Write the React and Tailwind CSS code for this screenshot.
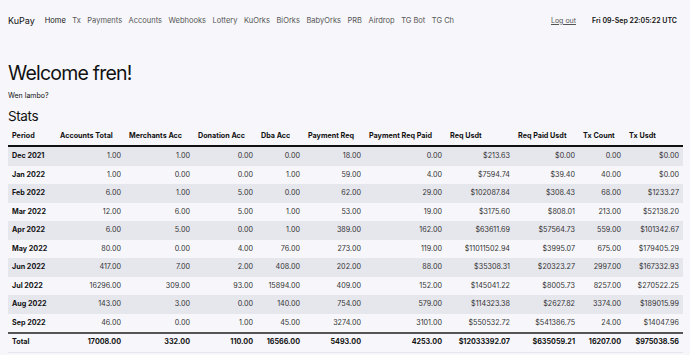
const navLinks = [
  "Tx",
  "Payments",
  "Accounts",
  "Webhooks",
  "Lottery",
  "KuOrks",
  "BiOrks",
  "BabyOrks",
  "PRB",
  "Airdrop",
  "TG Bot",
  "TG Ch",
];

const columns = [
  { label: "Period", w: "w-[48px]" },
  { label: "Accounts Total", w: "w-[69px]" },
  { label: "Merchants Acc", w: "w-[69px]" },
  { label: "Donation Acc", w: "w-[63px]" },
  { label: "Dba Acc", w: "w-[47px]" },
  { label: "Payment Req", w: "w-[61px]" },
  { label: "Payment Req Paid", w: "w-[81px]" },
  { label: "Req Usdt", w: "w-[68px]" },
  { label: "Req Paid Usdt", w: "w-[65px]" },
  { label: "Tx Count", w: "w-[46px]" },
  { label: "Tx Usdt", w: "w-[58px]" },
];

const rows = [
  ["Dec 2021", "1.00", "1.00", "0.00", "0.00", "18.00", "0.00", "$213.63", "$0.00", "0.00", "$0.00"],
  ["Jan 2022", "1.00", "0.00", "0.00", "1.00", "59.00", "4.00", "$7594.74", "$39.40", "40.00", "$0.00"],
  ["Feb 2022", "6.00", "1.00", "5.00", "0.00", "62.00", "29.00", "$102087.84", "$308.43", "68.00", "$1233.27"],
  ["Mar 2022", "12.00", "6.00", "5.00", "1.00", "53.00", "19.00", "$3175.60", "$808.01", "213.00", "$52138.20"],
  ["Apr 2022", "6.00", "5.00", "0.00", "1.00", "389.00", "162.00", "$63611.69", "$57564.73", "559.00", "$101342.67"],
  ["May 2022", "80.00", "0.00", "4.00", "76.00", "273.00", "119.00", "$11011502.94", "$3995.07", "675.00", "$179405.29"],
  ["Jun 2022", "417.00", "7.00", "2.00", "408.00", "202.00", "88.00", "$35308.31", "$20323.27", "2997.00", "$167332.93"],
  ["Jul 2022", "16296.00", "309.00", "93.00", "15894.00", "409.00", "152.00", "$145041.22", "$8005.73", "8257.00", "$270522.25"],
  ["Aug 2022", "143.00", "3.00", "0.00", "140.00", "754.00", "579.00", "$114323.38", "$2627.82", "3374.00", "$189015.99"],
  ["Sep 2022", "46.00", "0.00", "1.00", "45.00", "3274.00", "3101.00", "$550532.72", "$541386.75", "24.00", "$14047.96"],
];

const total = ["Total", "17008.00", "332.00", "110.00", "16566.00", "5493.00", "4253.00", "$12033392.07", "$635059.21", "16207.00", "$975038.56"];

export default function App() {
  return (
    <div className="min-h-[355px] bg-[#f7f7fb] px-2 font-['Inter',sans-serif] text-[#111]">
      {/* nav */}
      <nav className="flex h-[42px] items-center">
        <span className="mr-[10px] text-[9px]">KuPay</span>
        <ul className="flex items-center gap-[6.5px] text-[7.5px] text-[#555]">
          <li className="text-[#111]">Home</li>
          {navLinks.map((l) => (
            <li key={l}>{l}</li>
          ))}
        </ul>
        <div className="ml-auto flex items-center gap-[16px] pr-[5px] text-[7px]">
          <span className="text-[#555] underline">Log out</span>
          <span className="font-semibold">Fri 09-Sep 22:05:22 UTC</span>
        </div>
      </nav>

      <h1 className="mt-[17px] text-[19.5px] leading-[29px] tracking-[-0.04em]">Welcome fren!</h1>
      <p className="mt-[3px] text-[7px] leading-[10px]">Wen lambo?</p>
      <h2 className="mt-[6px] text-[13.5px] leading-[18px] tracking-[-0.03em]">Stats</h2>

      {/* stats table */}
      <table className="mt-[2px] w-[675px] table-fixed border-collapse text-[7.2px]">
        <thead>
          <tr className="border-b-2 border-[#111]">
            {columns.map((c) => (
              <th key={c.label} className={`${c.w} px-1 py-[4px] text-left font-bold leading-[10px]`}>
                {c.label}
              </th>
            ))}
          </tr>
        </thead>
        <tbody>
          {rows.map((r, i) => (
            <tr key={r[0]} className={i % 2 === 0 ? "bg-[#e6e6ed]" : ""}>
              {r.map((v, j) => (
                <td
                  key={j}
                  className={
                    j === 0
                      ? "px-1 py-1 text-left font-bold leading-[10.5px]"
                      : "px-1 py-1 text-right leading-[10.5px] text-[#333]"
                  }
                >
                  {v}
                </td>
              ))}
            </tr>
          ))}
          <tr className="border-t-2 border-b border-t-[#555] border-b-[#e6e6ed]">
            {total.map((v, j) => (
              <td key={j} className={`px-1 pb-1 pt-[3px] font-bold leading-[10.5px] ${j === 0 ? "text-left" : "text-right"}`}>
                {v}
              </td>
            ))}
          </tr>
        </tbody>
      </table>
    </div>
  );
}
